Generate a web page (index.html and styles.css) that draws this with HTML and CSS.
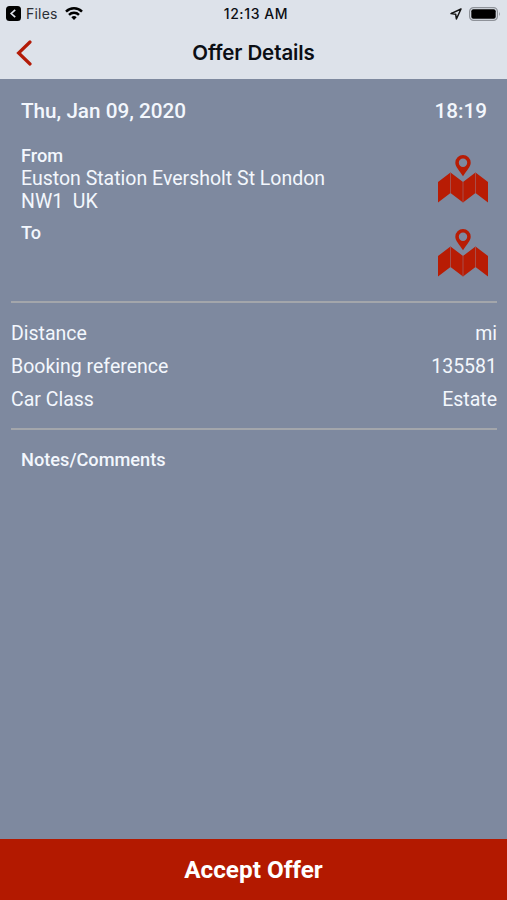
FILE: index.html
```html
<!DOCTYPE html>
<html lang="en">
<head>
<meta charset="utf-8">
<title>Offer Details</title>
<link rel="stylesheet" href="styles.css">
</head>
<body>
<header class="top">
  <div class="status">
    <div class="status-left">
      <svg width="15" height="15" viewBox="0 0 15 15"><rect width="15" height="15" rx="3.5"/><path d="M9.2 3.8 5.2 7.5l4 3.7" fill="none" stroke="#dfe3ec" stroke-width="1.7"/></svg>
      <span class="back-app">Files</span>
      <svg class="wifi" width="18" height="13" viewBox="0 0 18 13"><g fill="none" stroke="#000" stroke-width="2.5"><path d="M1 4.6a11.5 11.5 0 0 1 16 0"/><path d="M4 7.8a7.2 7.2 0 0 1 10 0"/></g><path d="M6.3 10.2a4 4 0 0 1 5.4 0L9 13z"/></svg>
    </div>
    <span class="clock">12:13 AM</span>
    <div class="status-right">
      <svg width="12" height="12" viewBox="0 0 12 12"><path d="M11 1 1 5.6l4.7.7.7 4.7z" fill="none" stroke="#111" stroke-width="1.5" stroke-linejoin="round"/></svg>
      <svg width="32" height="14" viewBox="0 0 32 14"><rect x=".6" y=".6" width="27.8" height="12.8" rx="4" fill="none" stroke="#8e9299" stroke-width="1.2"/><rect x="2.3" y="2.2" width="24.4" height="9.6" rx="2"/><path d="M30 4.8q1.8 2.2 0 4.4z" fill="#8e9299"/></svg>
    </div>
  </div>
  <div class="nav">
    <svg class="back" width="16" height="26" viewBox="0 0 16 26"><path d="M14 2 2.6 13 14 24" fill="none" stroke="#b31b08" stroke-width="3.2" stroke-linecap="round"/></svg>
    <h1>Offer Details</h1>
  </div>
</header>
<main>
  <section class="trip">
    <div class="when"><span>Thu, Jan 09, 2020</span><span>18:19</span></div>
    <div class="stop from">
      <div><h2>From</h2><p>Euston Station Eversholt St London<br>NW1&nbsp; UK</p></div>
      <svg class="map" width="50" height="49" viewBox="0 0 50 49"><use href="#map"/></svg>
    </div>
    <div class="stop to">
      <div><h2>To</h2></div>
      <svg class="map" width="50" height="49" viewBox="0 0 50 49"><g id="map"><path d="M0 27 12.5 17.5 25 27 37.5 17.5 50 27V47.5L37.5 38 25 47.5 12.5 38 0 47.5z"/><path d="M12.5 17.5V38M25 27V47.5M37.5 17.5V38" stroke="#a45b5a" stroke-width=".8"/><path fill-rule="evenodd" d="M25 0a7.7 7.7 0 0 1 7.7 7.7c0 4-4 7.5-7.7 13.6-3.7-6.1-7.7-9.6-7.7-13.6A7.7 7.7 0 0 1 25 0zm0 3.6a4.2 4.2 0 1 0 0 8.4 4.2 4.2 0 0 0 0-8.4z"/></g></svg>
    </div>
  </section>
  <dl class="facts">
    <div><dt>Distance</dt><dd>mi</dd></div>
    <div><dt>Booking reference</dt><dd>135581</dd></div>
    <div><dt>Car Class</dt><dd>Estate</dd></div>
  </dl>
  <h2 class="notes">Notes/Comments</h2>
</main>
<button class="accept">Accept Offer</button>
</body>
</html>
```
FILE: styles.css
```css
* { box-sizing: border-box; margin: 0; }
body { height: 900px; display: flex; flex-direction: column; background: #7e899f; color: #f3f7fd; font-family: Roboto, sans-serif; overflow: hidden; }
svg { display: block; flex: none; }
.top { height: 79px; background: #dde2ea; color: #0b0e14; font-family: Inter, sans-serif; }
.status { height: 27px; padding: 0 6px; display: grid; grid-template-columns: 1fr auto 1fr; align-items: center; font-size: 14px; }
.status-left, .status-right { display: flex; align-items: center; }
.back-app { margin-left: 5px; color: #2b2f36; letter-spacing: .2px; }
.wifi { margin-left: 7px; }
.clock { font-weight: 500; letter-spacing: .6px; padding-left: 5px; }
.status-right { justify-content: flex-end; gap: 7px; }
.nav { height: 51px; display: grid; grid-template-columns: 1fr auto 1fr; align-items: center; padding: 0 16px; }
.nav h1 { font-size: 20.5px; font-weight: 600; letter-spacing: -.1px; line-height: 25px; padding-bottom: 1px; }
main { flex: 1; }
.trip { height: 222px; padding: 0 20px 0 21px; }
.when { height: 64px; display: flex; justify-content: space-between; align-items: center; font-size: 20.7px; font-weight: 500; }
.stop { display: flex; justify-content: space-between; }
h2 { font-size: 18.2px; line-height: 22px; font-weight: 500; }
.stop p { font-size: 19.5px; line-height: 23px; }
.from { height: 77px; padding-top: 2px; }
.to { padding-top: 2px; }
.map { margin: 10px -1px 0 0; fill: #b81c04; }
.to .map { margin-top: 7px; }
.facts { margin: 0 10px 0 11px; border-top: 2px solid #a3a6ab; border-bottom: 2px solid #a3a6ab; height: 129px; padding-top: 14px; }
.facts div { height: 33px; display: flex; justify-content: space-between; align-items: center; font-size: 19.5px; }
.facts dd { margin: 0; }
.notes { margin: 19px 21px; }
.accept { height: 61px; border: 0; background: #b31900; color: #fff; font: 700 24.3px Roboto, sans-serif; }
```
